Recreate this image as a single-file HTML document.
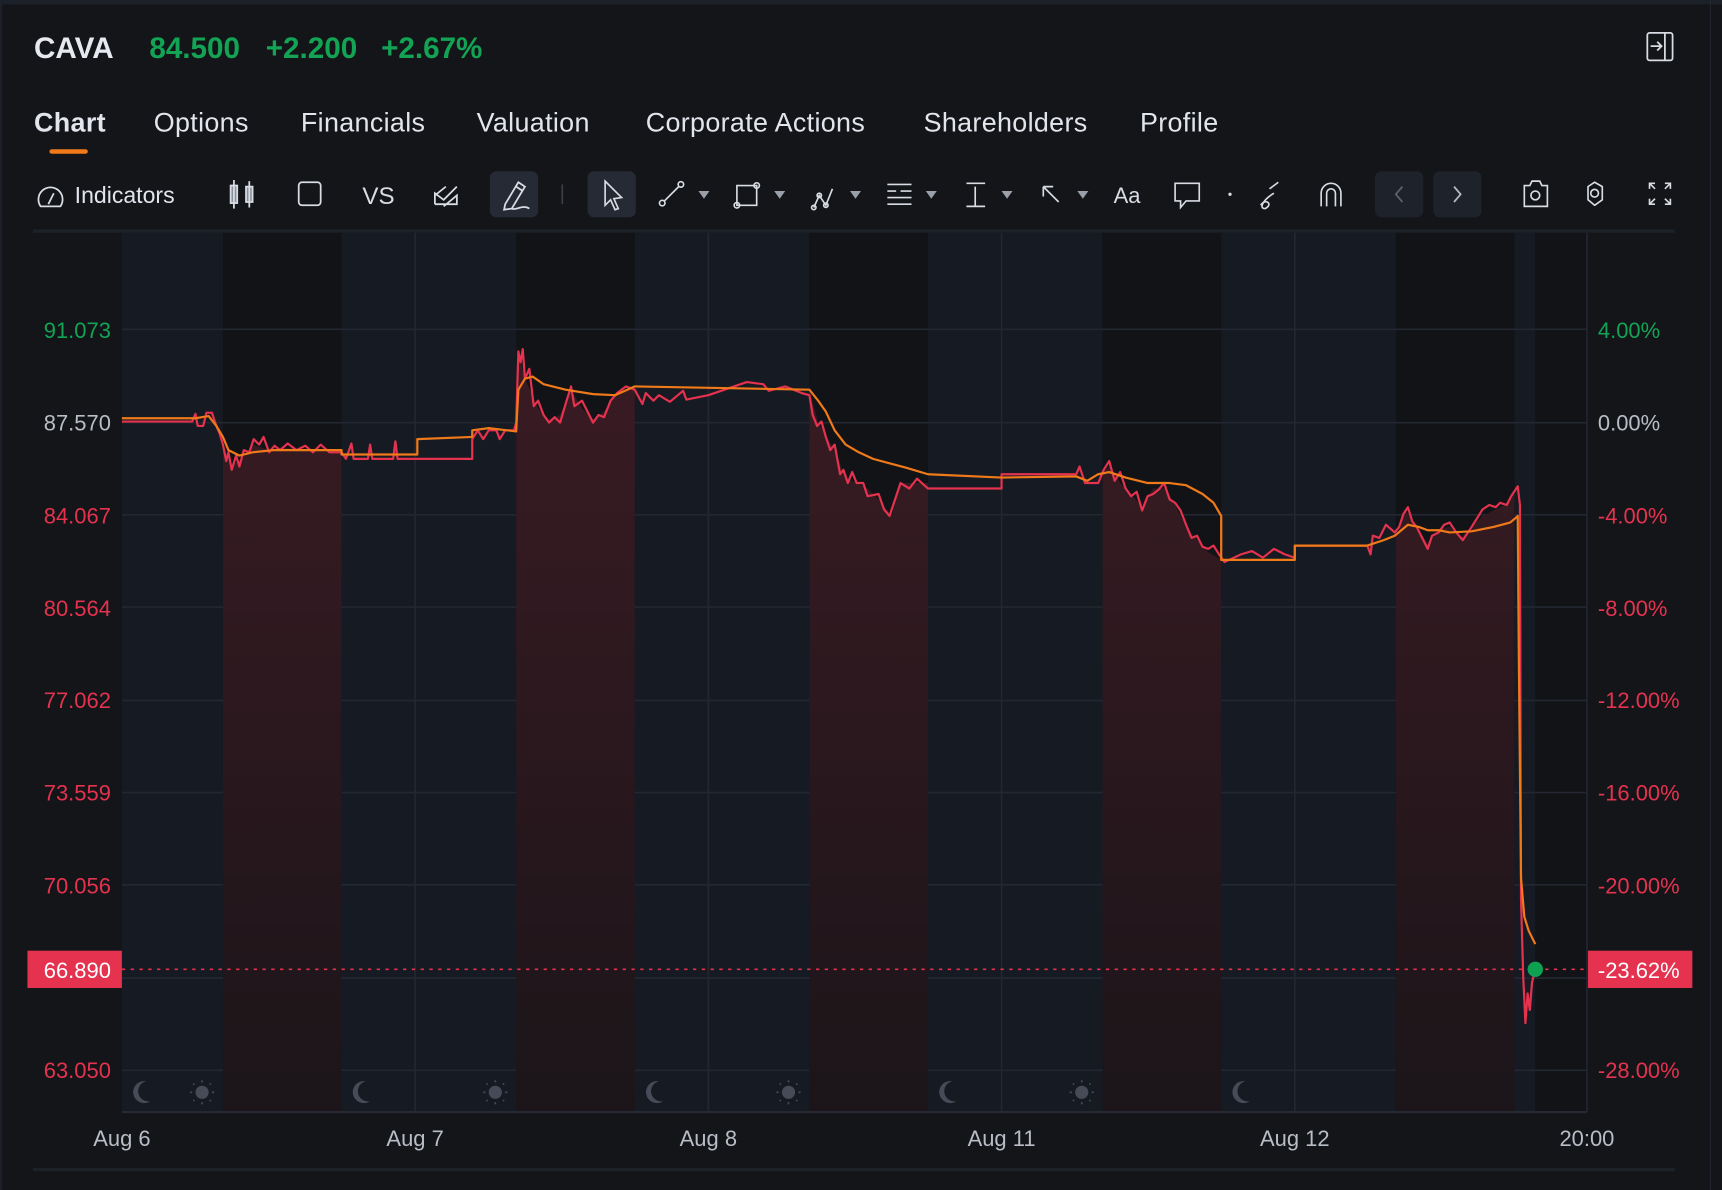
<!DOCTYPE html>
<html><head><meta charset="utf-8"><style>
html,body{margin:0;padding:0;background:#131519;overflow:hidden}
svg{display:block}
text{font-family:"Liberation Sans",sans-serif}
</style></head><body>
<svg width="1722" height="1190" viewBox="0 0 1568 1084" preserveAspectRatio="none">
<defs>
<linearGradient id="rg" x1="0" y1="0" x2="0" y2="1">
<stop offset="0" stop-color="#3a1b23"/><stop offset="1" stop-color="#1b1519"/>
</linearGradient>
<clipPath id="bands">
<rect x="203" y="212" width="108" height="800"/>
<rect x="470" y="212" width="108" height="800"/>
<rect x="737" y="212" width="108" height="800"/>
<rect x="1004" y="212" width="108" height="800"/>
<rect x="1271" y="212" width="108" height="800"/>
</clipPath>
</defs>
<rect width="1568" height="1084" fill="#131519"/>
<rect x="0" y="0" width="1568" height="4" fill="#1c2029"/>
<rect x="0" y="0" width="2" height="1084" fill="#1c2029"/>
<rect x="1557" y="0" width="1" height="1084" fill="#22262e"/>
<!-- header -->
<text x="31" y="53" font-size="27" font-weight="bold" fill="#e6e9ef">CAVA</text>
<text x="136" y="53" font-size="27" font-weight="bold" fill="#12a454">84.500</text>
<text x="242" y="53" font-size="27" font-weight="bold" fill="#12a454">+2.200</text>
<text x="347" y="53" font-size="27" font-weight="bold" fill="#12a454">+2.67%</text>
<rect x="1500" y="30" width="23" height="25" rx="2" fill="none" stroke="#d8dce3" stroke-width="1.6"/>
<line x1="1516" y1="30" x2="1516" y2="55" stroke="#d8dce3" stroke-width="1.6"/>
<path d="M1503 42 H1512 M1509 38 L1513 42 L1509 46" stroke="#d8dce3" stroke-width="1.6" fill="none"/>
<!-- tabs -->
<g font-size="24.5" fill="#e2e5ec" letter-spacing="0.3">
<text x="31" y="120" font-weight="bold">Chart</text>
<text x="140" y="120">Options</text>
<text x="274" y="120">Financials</text>
<text x="434" y="120">Valuation</text>
<text x="588" y="120">Corporate Actions</text>
<text x="841" y="120">Shareholders</text>
<text x="1038" y="120">Profile</text>
</g>
<rect x="45" y="136" width="35" height="4" rx="2" fill="#f07a1a"/>
<!-- toolbar -->
<g stroke="#d8dce3" stroke-width="1.6" fill="none">
<path d="M37 188 A11 11 0 1 1 55 188 Z" stroke-linejoin="round"/><line x1="44" y1="186" x2="49" y2="176"/>
</g>
<text x="68" y="185" font-size="21" fill="#e2e5ec">Indicators</text>
<g stroke="#d8dce3" stroke-width="1.6" fill="none">
<rect x="210" y="169" width="6" height="16" fill="#8a909a"/><line x1="213" y1="164" x2="213" y2="190"/>
<rect x="224" y="170" width="6" height="14" fill="#8a909a"/><line x1="227" y1="165" x2="227" y2="189"/>
<rect x="272" y="166" width="20" height="21" rx="3"/>
<path d="M396 186 V176 L404 182 L416 170 M396 186 H416 V178 L404 188 M396 178 L406 170"/>
</g>
<text x="330" y="186" font-size="22" fill="#d8dce3">VS</text>
<rect x="446" y="156" width="44" height="42" rx="6" fill="#252a34"/>
<path d="M460 186 L472 166 L478 170 L466 190 L459 191 Z M470 170 L476 174 M466 190 C470 192 476 186 482 190" stroke="#d8dce3" stroke-width="1.6" fill="none"/>
<line x1="512" y1="168" x2="512" y2="186" stroke="#3a3f48" stroke-width="1.5"/>
<rect x="535" y="156" width="44" height="42" rx="6" fill="#252a34"/>
<path d="M551 165 L566 180 L559 181 L563 190 L560 191 L556 182 L551 187 Z" stroke="#d8dce3" stroke-width="1.5" fill="none"/>
<g stroke="#d8dce3" stroke-width="1.5" fill="none">
<circle cx="603" cy="185" r="2.5"/><circle cx="620" cy="168" r="2.5"/><line x1="605" y1="183" x2="618" y2="170"/>
<path d="M671 169 H689 V187 H671 Z"/><circle cx="671" cy="187" r="2.5"/><circle cx="689" cy="169" r="2.5"/>
<path d="M741 189 L746 178 L752 187 L758 172" /><circle cx="741" cy="189" r="2"/><circle cx="746" cy="178" r="2"/><circle cx="752" cy="187" r="2"/>
<path d="M808 168 H830 M808 180 H830 M808 186 H830 M808 174 H816 M820 174 H830"/>
<path d="M880 167 H897 M888 170 V188 M880 188 H897"/>
<path d="M950 170 L964 184 M950 170 V179 M950 170 H959"/>
<path d="M1070 167 H1092 V183 H1080 L1075 189 V183 H1070 Z"/>
<path d="M1148 187 C1152 180 1160 186 1152 190 C1146 190 1150 182 1160 176 M1156 172 L1164 166"/>
<path d="M1203 188 V176 A9 9 0 0 1 1221 176 V188 M1208 188 V176 A4 4 0 0 1 1216 176 V188"/>
<path d="M1388 169 H1393 L1395 165 H1402 L1404 169 H1409 V188 H1388 Z"/><circle cx="1398" cy="178" r="4"/>
<path d="M1446 170 L1452 166 L1459 170 V182 L1452 187 L1446 182 Z" stroke-linejoin="round"/><circle cx="1452" cy="176" r="3.5"/>
<path d="M1502 172 V167 H1507 M1502 167 L1507 172 M1521 172 V167 H1516 M1521 167 L1516 172 M1502 181 V186 H1507 M1502 186 L1507 181 M1521 181 V186 H1516 M1521 186 L1516 181"/>
</g>
<circle cx="1120" cy="177" r="1.5" fill="#d8dce3"/>
<text x="1014" y="185" font-size="20" fill="#d8dce3">Aa</text>
<g fill="#9aa0aa">
<path d="M636 174 H646 L641 181 Z"/><path d="M705 174 H715 L710 181 Z"/><path d="M774 174 H784 L779 181 Z"/><path d="M843 174 H853 L848 181 Z"/><path d="M912 174 H922 L917 181 Z"/><path d="M981 174 H991 L986 181 Z"/>
</g>
<rect x="1252" y="156" width="44" height="42" rx="6" fill="#1e222a"/>
<rect x="1305" y="156" width="44" height="42" rx="6" fill="#1e222a"/>
<path d="M1277 170 L1271 177 L1277 184" stroke="#5d636d" stroke-width="1.6" fill="none"/>
<path d="M1324 170 L1330 177 L1324 184" stroke="#b5bac3" stroke-width="1.6" fill="none"/>
<rect x="30" y="209" width="1495" height="3" fill="#1d2128"/>
<!-- plot -->
<rect x="111" y="212" width="1334" height="801" fill="#161a22"/>
<g fill="#111317">
<rect x="203" y="212" width="108" height="801"/><rect x="470" y="212" width="108" height="801"/><rect x="737" y="212" width="108" height="801"/><rect x="1004" y="212" width="108" height="801"/><rect x="1271" y="212" width="108" height="801"/><rect x="1398" y="212" width="47" height="801"/>
</g>
<g stroke="#232731" stroke-width="1.5">
<line x1="111" y1="300" x2="1445" y2="300"/><line x1="111" y1="385" x2="1445" y2="385"/><line x1="111" y1="469" x2="1445" y2="469"/><line x1="111" y1="553" x2="1445" y2="553"/><line x1="111" y1="638" x2="1445" y2="638"/><line x1="111" y1="722" x2="1445" y2="722"/><line x1="111" y1="806" x2="1445" y2="806"/><line x1="111" y1="891" x2="1445" y2="891"/><line x1="111" y1="975" x2="1445" y2="975"/>
<line x1="378" y1="212" x2="378" y2="1013"/><line x1="645" y1="212" x2="645" y2="1013"/><line x1="912" y1="212" x2="912" y2="1013"/><line x1="1179" y1="212" x2="1179" y2="1013"/>
<line x1="1445" y1="212" x2="1445" y2="1013"/>
</g>
<line x1="111" y1="1013" x2="1445" y2="1013" stroke="#252a33" stroke-width="2"/>
<!-- red area -->
<g clip-path="url(#bands)">
<path fill="url(#rg)" d="M200 395 L205 410 L210 425 L220 418 L230 405 L245 410 L260 408 L280 410 L311 412 L470 390 L472 320 L478 345 L490 372 L500 382 L510 378 L520 355 L530 372 L540 382 L550 375 L560 360 L578 352 L737 355 L745 385 L760 410 L770 435 L790 445 L800 455 L812 470 L820 440 L845 440 L1004 430 L1010 425 L1020 440 L1030 450 L1040 462 L1050 445 L1062 445 L1070 460 L1080 480 L1090 492 L1100 503 L1112 510 L1271 490 L1280 465 L1290 480 L1300 495 L1310 482 L1320 480 L1330 490 L1350 470 L1370 460 L1380 445 L1383 455 L1383 1013 L200 1013 Z"/>
</g>
<!-- price line -->
<polyline fill="none" stroke="#e4324f" stroke-width="2" stroke-linejoin="round" points="111,384 140,384 175,384 178,377 180,388 185,388 188,376 193,376 197,388 200,395 203,405 206,420 208,412 211,428 215,415 218,425 222,410 227,412 231,400 236,405 240,398 245,412 250,406 255,410 262,404 270,410 278,406 285,412 292,405 300,412 311,412 315,418 320,404 322,418 335,418 337,405 339,418 358,418 360,402 362,418 380,418 430,418 430,400 435,392 440,400 445,392 452,392 455,400 460,392 468,392 470,385 472,320 474,330 476,318 478,345 482,336 486,370 490,365 495,378 500,385 505,380 510,385 515,368 520,352 523,370 530,365 535,375 540,385 545,378 550,380 556,365 562,358 570,352 578,355 585,368 588,358 595,365 600,360 610,366 622,356 625,364 645,360 680,348 695,350 700,356 715,352 730,358 737,360 740,378 744,388 748,384 752,398 756,410 760,405 765,432 768,428 772,440 776,430 780,440 786,440 790,452 800,450 805,464 810,470 815,455 820,440 828,445 835,436 845,445 912,445 912,432 980,432 983,425 988,440 1000,440 1005,428 1010,420 1015,438 1020,430 1025,445 1030,452 1035,448 1040,465 1045,452 1050,450 1055,446 1060,440 1065,455 1070,458 1075,465 1080,478 1085,490 1090,488 1095,498 1100,500 1105,497 1110,505 1115,512 1130,505 1140,502 1150,508 1160,500 1170,505 1179,508 1179,497 1245,497 1248,505 1250,488 1256,490 1262,478 1270,485 1274,480 1278,468 1282,462 1286,475 1290,480 1295,490 1300,500 1304,488 1310,485 1315,478 1320,476 1326,485 1332,492 1340,480 1345,472 1350,464 1356,460 1362,462 1366,458 1372,460 1376,452 1380,446 1382,443 1384,460 1385,820 1387,890 1389,932 1391,905 1393,920 1395,895 1398,883"/>
<!-- vwap -->
<polyline fill="none" stroke="#f07a1a" stroke-width="2" stroke-linejoin="round" points="111,381 178,381 190,379 197,388 203,398 208,410 218,415 230,412 250,410 280,410 311,410 311,414 380,414 380,400 430,398 430,392 445,390 470,393 472,355 478,345 485,343 495,350 515,355 540,359 560,360 578,352 737,355 745,365 752,375 760,392 770,405 782,412 795,418 810,422 825,426 845,432 912,435 980,434 990,438 1000,432 1010,430 1025,435 1045,440 1065,440 1080,442 1095,450 1105,458 1112,470 1112,510 1179,510 1179,497 1245,497 1260,492 1270,488 1282,478 1292,480 1300,483 1310,483 1320,485 1340,484 1360,480 1375,476 1380,472 1382,470 1383,600 1385,800 1388,835 1392,848 1398,860"/>
<!-- last price line -->
<line x1="111" y1="883" x2="1445" y2="883" stroke="#e4324f" stroke-width="1.5" stroke-dasharray="3 5"/>
<circle cx="1398" cy="883" r="7" fill="#0fa152"/>
<!-- day/night icons -->
<g fill="#454c58">
<path d="M133 985 A10 10 0 1 0 137 1003 A8 8 0 0 1 133 985 Z"/>
<path d="M333 985 A10 10 0 1 0 337 1003 A8 8 0 0 1 333 985 Z"/>
<path d="M600 985 A10 10 0 1 0 604 1003 A8 8 0 0 1 600 985 Z"/>
<path d="M867 985 A10 10 0 1 0 871 1003 A8 8 0 0 1 867 985 Z"/>
<path d="M1134 985 A10 10 0 1 0 1138 1003 A8 8 0 0 1 1134 985 Z"/>
<circle cx="184" cy="995" r="6"/><circle cx="451" cy="995" r="6"/><circle cx="718" cy="995" r="6"/><circle cx="985" cy="995" r="6"/>
</g>
<g stroke="#454c58" stroke-width="1.5">
<path d="M184 984 V986 M184 1004 V1006 M173 995 H175 M193 995 H195 M176 987 L177 988 M191 1002 L192 1003 M176 1003 L177 1002 M191 988 L192 987"/>
<path d="M451 984 V986 M451 1004 V1006 M440 995 H442 M460 995 H462 M443 987 L444 988 M458 1002 L459 1003 M443 1003 L444 1002 M458 988 L459 987"/>
<path d="M718 984 V986 M718 1004 V1006 M707 995 H709 M727 995 H729 M710 987 L711 988 M725 1002 L726 1003 M710 1003 L711 1002 M725 988 L726 987"/>
<path d="M985 984 V986 M985 1004 V1006 M974 995 H976 M994 995 H996 M977 987 L978 988 M992 1002 L993 1003 M977 1003 L978 1002 M992 988 L993 987"/>
</g>
<!-- left axis -->
<g font-size="20" text-anchor="end">
<text x="101" y="308" fill="#12a454">91.073</text>
<text x="101" y="392" fill="#b8bdc6">87.570</text>
<text x="101" y="477" fill="#e4324f">84.067</text>
<text x="101" y="561" fill="#e4324f">80.564</text>
<text x="101" y="645" fill="#e4324f">77.062</text>
<text x="101" y="729" fill="#e4324f">73.559</text>
<text x="101" y="814" fill="#e4324f">70.056</text>
<text x="101" y="982" fill="#e4324f">63.050</text>
</g>
<rect x="25" y="866" width="86" height="34" fill="#e4324f"/>
<text x="101" y="891" font-size="20" text-anchor="end" fill="#ffffff">66.890</text>
<!-- right axis -->
<g font-size="20">
<text x="1455" y="308" fill="#12a454">4.00%</text>
<text x="1455" y="392" fill="#b8bdc6">0.00%</text>
<text x="1455" y="477" fill="#e4324f">-4.00%</text>
<text x="1455" y="561" fill="#e4324f">-8.00%</text>
<text x="1455" y="645" fill="#e4324f">-12.00%</text>
<text x="1455" y="729" fill="#e4324f">-16.00%</text>
<text x="1455" y="814" fill="#e4324f">-20.00%</text>
<text x="1455" y="982" fill="#e4324f">-28.00%</text>
</g>
<rect x="1446" y="866" width="95" height="34" fill="#e4324f"/>
<text x="1455" y="891" font-size="20" fill="#ffffff">-23.62%</text>
<!-- x axis -->
<g font-size="20" fill="#b8bdc6" text-anchor="middle">
<text x="111" y="1044">Aug 6</text>
<text x="378" y="1044">Aug 7</text>
<text x="645" y="1044">Aug 8</text>
<text x="912" y="1044">Aug 11</text>
<text x="1179" y="1044">Aug 12</text>
<text x="1445" y="1044">20:00</text>
</g>
<rect x="30" y="1064" width="1495" height="3" fill="#1d2128"/>
</svg>
</body></html>
